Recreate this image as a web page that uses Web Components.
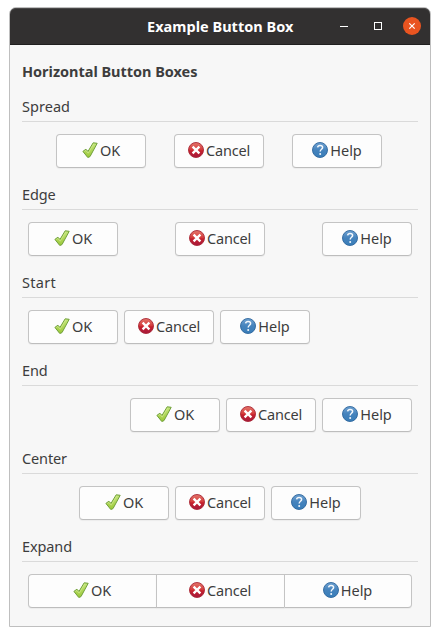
<!DOCTYPE html>
<html lang="en">
<head>
<meta charset="utf-8">
<title>Example Button Box</title>
<style>
body{margin:0;width:440px;height:636px;background:#fff;overflow:hidden;font:14.5px/20px "Noto Sans","Open Sans",sans-serif;color:#3d3d3d}
</style>
</head>
<body>
<app-window heading="Example Button Box">
  <fit-text w="175.5" style="font-weight:700">Horizontal Button Boxes</fit-text>
  <button-row label="Spread" w="48" mode="spread"></button-row>
  <button-row label="Edge" w="33.5" mode="edge"></button-row>
  <button-row label="Start" w="34" mode="start"></button-row>
  <button-row label="End" w="25.5" mode="end"></button-row>
  <button-row label="Center" w="45" mode="center"></button-row>
  <button-row label="Expand" w="50" mode="expand"></button-row>
</app-window>
<script>
// Text laid out to an exact advance width by adjusting its tracking.
customElements.define('fit-text', class extends HTMLElement {
  connectedCallback() {
    const r = this.attachShadow({mode: 'open'});
    r.innerHTML = `<style>:host{display:block;white-space:nowrap}span{display:inline-block}</style><span></span>`;
    const s = r.querySelector('span');
    s.textContent = this.textContent;
    const w = +this.getAttribute('w');
    this.style.width = w + 'px';
    s.style.letterSpacing = (w - s.getBoundingClientRect().width) / s.textContent.length + 'px';
  }
});

const icons = {
  ok: `<defs><linearGradient id="g" x1="0" y1="0" x2="0" y2="1"><stop offset="0" stop-color="#c5e67c"/><stop offset="1" stop-color="#9bc838"/></linearGradient></defs>
    <path d="M.9 9.4 3.9 7.2 6 9.4 11.2.8 15.2 1.3 8 14.6 5.8 15.5Z" fill="url(#g)" stroke="#6f9f3a" stroke-width="1" stroke-linejoin="round"/>
    <path d="M2.4 9.5 3.8 8.4 6.2 11.2 11.8 1.8" fill="none" stroke="#d6ec9c" stroke-width=".6"/>`,
  cancel: `<defs><linearGradient id="g" x1="0" y1="0" x2="0" y2="1"><stop offset="0" stop-color="#e4786c"/><stop offset=".48" stop-color="#d43b3c"/><stop offset=".55" stop-color="#c6212d"/><stop offset="1" stop-color="#a5183c"/></linearGradient></defs>
    <circle cx="8" cy="8" r="7.5" fill="url(#g)" stroke="#a92736" stroke-width=".9"/>
    <path d="M5.4 5.4 10.6 10.6M10.6 5.4 5.4 10.6" stroke="#fff" stroke-width="2.3" stroke-linecap="square"/>`,
  help: `<defs><linearGradient id="g" x1="0" y1="0" x2="0" y2="1"><stop offset="0" stop-color="#70a2d1"/><stop offset=".5" stop-color="#4583bd"/><stop offset="1" stop-color="#397db8"/></linearGradient></defs>
    <circle cx="8" cy="8" r="7.5" fill="url(#g)" stroke="#2c659d" stroke-width=".9"/>
    <path d="M5.6 5.3C5.8 3.9 6.8 3.4 8.1 3.4 9.6 3.4 10.6 4.2 10.6 5.5 10.6 7.2 8.2 7.4 8.2 9.5" fill="none" stroke="#f4f8fc" stroke-width="1.5"/>
    <circle cx="8.2" cy="12" r="1" fill="#f4f8fc"/>`
};

customElements.define('icon-button', class extends HTMLElement {
  connectedCallback() {
    this.attachShadow({mode: 'open'}).innerHTML = `<style>
      :host{display:flex;box-sizing:border-box;width:90px;height:34px;border:1px solid #c4c4c4;border-bottom-color:#bdbdbd;border-radius:4px;background:#fdfdfd;box-shadow:0 1px 1px #0000000c;align-items:center;justify-content:center;gap:2px}
      svg{width:16px;height:16px;flex:none;margin-bottom:2px}
      ::slotted(fit-text){margin-bottom:2px}
    </style><svg viewBox="0 0 16 16">${icons[this.getAttribute('icon')]}</svg><slot></slot>`;
  }
});

customElements.define('button-row', class extends HTMLElement {
  connectedCallback() {
    this.attachShadow({mode: 'open'}).innerHTML = `<style>
      :host{display:block;height:88px}
      .rule{height:1px;background:#dadada;margin-top:5px}
      .box{display:flex;gap:6px;padding:12px 6px 0}
      :host([mode=spread]) .box{gap:28px;padding-left:34px}
      :host([mode=edge]) .box{justify-content:space-between}
      :host([mode=end]) .box{justify-content:flex-end}
      :host([mode=center]) .box{justify-content:center}
      :host([mode=expand]) .box{gap:0}
      :host([mode=expand]) icon-button{width:128px;border-radius:0;padding-right:1px}
      :host([mode=expand]) icon-button:not(:last-child){border-right-width:0}
      :host([mode=expand]) icon-button:first-child{border-radius:4px 0 0 4px}
      :host([mode=expand]) icon-button:last-child{border-radius:0 4px 4px 0}
    </style>
    <fit-text w="${this.getAttribute('w')}">${this.getAttribute('label')}</fit-text>
    <div class="rule"></div>
    <div class="box">
      <icon-button icon="ok"><fit-text w="20">OK</fit-text></icon-button>
      <icon-button icon="cancel"><fit-text w="44">Cancel</fit-text></icon-button>
      <icon-button icon="help"><fit-text w="31.5">Help</fit-text></icon-button>
    </div>`;
  }
});

customElements.define('title-bar', class extends HTMLElement {
  connectedCallback() {
    this.attachShadow({mode: 'open'}).innerHTML = `<style>
      :host{display:grid;grid-template-columns:137px 147px 1fr;box-sizing:border-box;height:37px;background:#323030;border-bottom:1px solid #201f1f;border-radius:6px 6px 0 0;box-shadow:inset 0 1px #4a4848;color:#fff;align-items:center}
      fit-text{grid-column:2;font-weight:700}
      .controls{display:flex;gap:16px;justify-content:flex-end;padding-right:9px}
      svg{width:18px;height:18px;display:block}
    </style><fit-text w="146.5">${this.getAttribute('heading')}</fit-text>
    <div class="controls">
      <svg viewBox="0 0 18 18"><path d="M5 9.5H13" stroke="#fff"/></svg>
      <svg viewBox="0 0 18 18"><rect x="5.5" y="5.5" width="7" height="7" fill="none" stroke="#fff"/></svg>
      <svg viewBox="0 0 18 18"><circle cx="9" cy="9" r="9" fill="#e95420"/><path d="M6.3 6.3 11.7 11.7M11.7 6.3 6.3 11.7" stroke="#fff" stroke-width="1.2"/></svg>
    </div>`;
  }
});

customElements.define('app-window', class extends HTMLElement {
  connectedCallback() {
    this.attachShadow({mode: 'open'}).innerHTML = `<style>
      :host{display:block;box-sizing:border-box;width:422px;height:620px;margin:7px 9px;border:1px solid #bfbfbf;border-radius:7px 7px 0 0;background:#f7f7f7}
      .body{padding:16px 12px 0}
      ::slotted(fit-text){margin-bottom:15px}
    </style><title-bar heading="${this.getAttribute('heading')}"></title-bar><div class="body"><slot></slot></div>`;
  }
});
</script>
</body>
</html>
